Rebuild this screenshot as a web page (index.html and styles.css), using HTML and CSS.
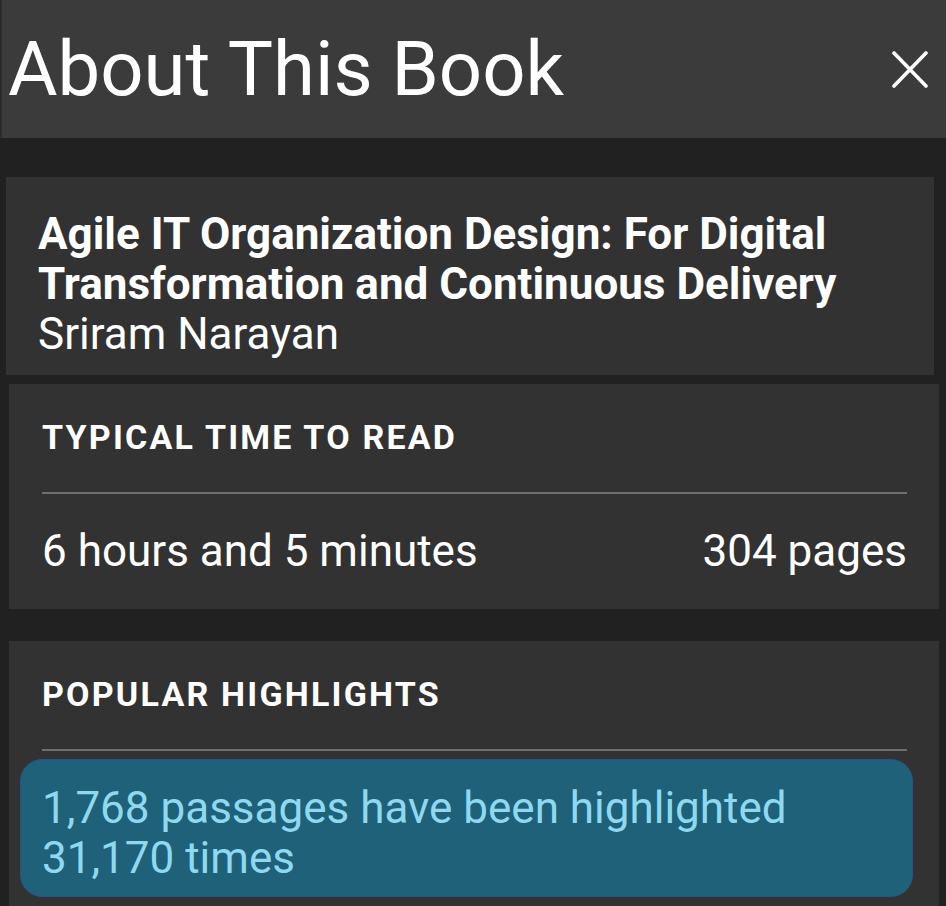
FILE: index.html
```html
<!DOCTYPE html>
<html lang="en">
<head>
    <meta charset="UTF-8">
    <meta name="viewport" content="width=device-width, initial-scale=1.0">
    <title>About This Book</title>
    <link rel="stylesheet" href="styles.css">
</head>
<body>
<div class="header">
    <h1>About This Book</h1>
    <button class="close-btn" aria-label="Close">
        <svg width="36" height="37" viewBox="0 0 36 37">
            <path d="M2 2 L34 35 M34 2 L2 35" stroke="#fff" stroke-width="3.6" stroke-linecap="round"/>
        </svg>
    </button>
</div>

<!-- Book title and author -->
<div class="card card-book">
    <div class="book-title">Agile IT Organization Design: For Digital Transformation and Continuous Delivery</div>
    <div class="book-author">Sriram Narayan</div>
</div>

<!-- Reading time -->
<div class="card card-section">
    <div class="section-label">TYPICAL TIME TO READ</div>
    <div class="divider"></div>
    <div class="read-row">
        <span>6 hours and 5 minutes</span>
        <span>304 pages</span>
    </div>
</div>

<!-- Highlights -->
<div class="card card-section card-last">
    <div class="section-label">POPULAR HIGHLIGHTS</div>
    <div class="divider"></div>
    <div class="highlight-box">1,768 passages have been highlighted 31,170 times</div>
</div>
</body>
</html>
```

FILE: styles.css
```css
body {
    font-family: Roboto, "Noto Sans", sans-serif;
    margin: 0;
    background-color: #212121;
    color: #fff;
    overflow: hidden;
}
.header {
    height: 138px;
    box-sizing: border-box;
    background-color: #3b3b3b;
    border-left: 2px solid #2c2c2c;
    display: flex;
    align-items: center;
    justify-content: space-between;
    padding: 0 18px 0 6px;
}
.header h1 {
    margin: 0;
    font-size: 76px;
    font-weight: 400;
    line-height: 1;
}
.close-btn {
    background: none;
    border: none;
    padding: 0;
    margin-top: 1px;
    display: flex;
}
.card {
    background-color: #323232;
}
.card-book {
    margin: 39px 12px 0 6px;
    padding: 32px 32px 16px 32px;
    font-size: 44px;
    line-height: 50px;
}
.book-title {
    font-weight: 700;
}
.card-section {
    margin: 9px 7px 0 9px;
    padding: 33px 32px 33px 33px;
}
.card-last {
    margin-top: 32px;
    padding-bottom: 40px;
}
.section-label {
    font-size: 34px;
    font-weight: 700;
    letter-spacing: 2.2px;
    line-height: 40px;
}
.divider {
    height: 2px;
    background-color: #6f6f6f;
    margin-top: 35px;
}
.read-row {
    display: flex;
    justify-content: space-between;
    font-size: 44px;
    line-height: 50px;
    margin-top: 32px;
}
.highlight-box {
    margin: 8px -6px 0 -22px;
    padding: 23px 20px 13px 21px;
    background-color: #1f6179;
    border: 1.5px solid #2d4f8c;
    border-radius: 22px;
    color: #8fd9f0;
    font-size: 44px;
    line-height: 50px;
}
```
